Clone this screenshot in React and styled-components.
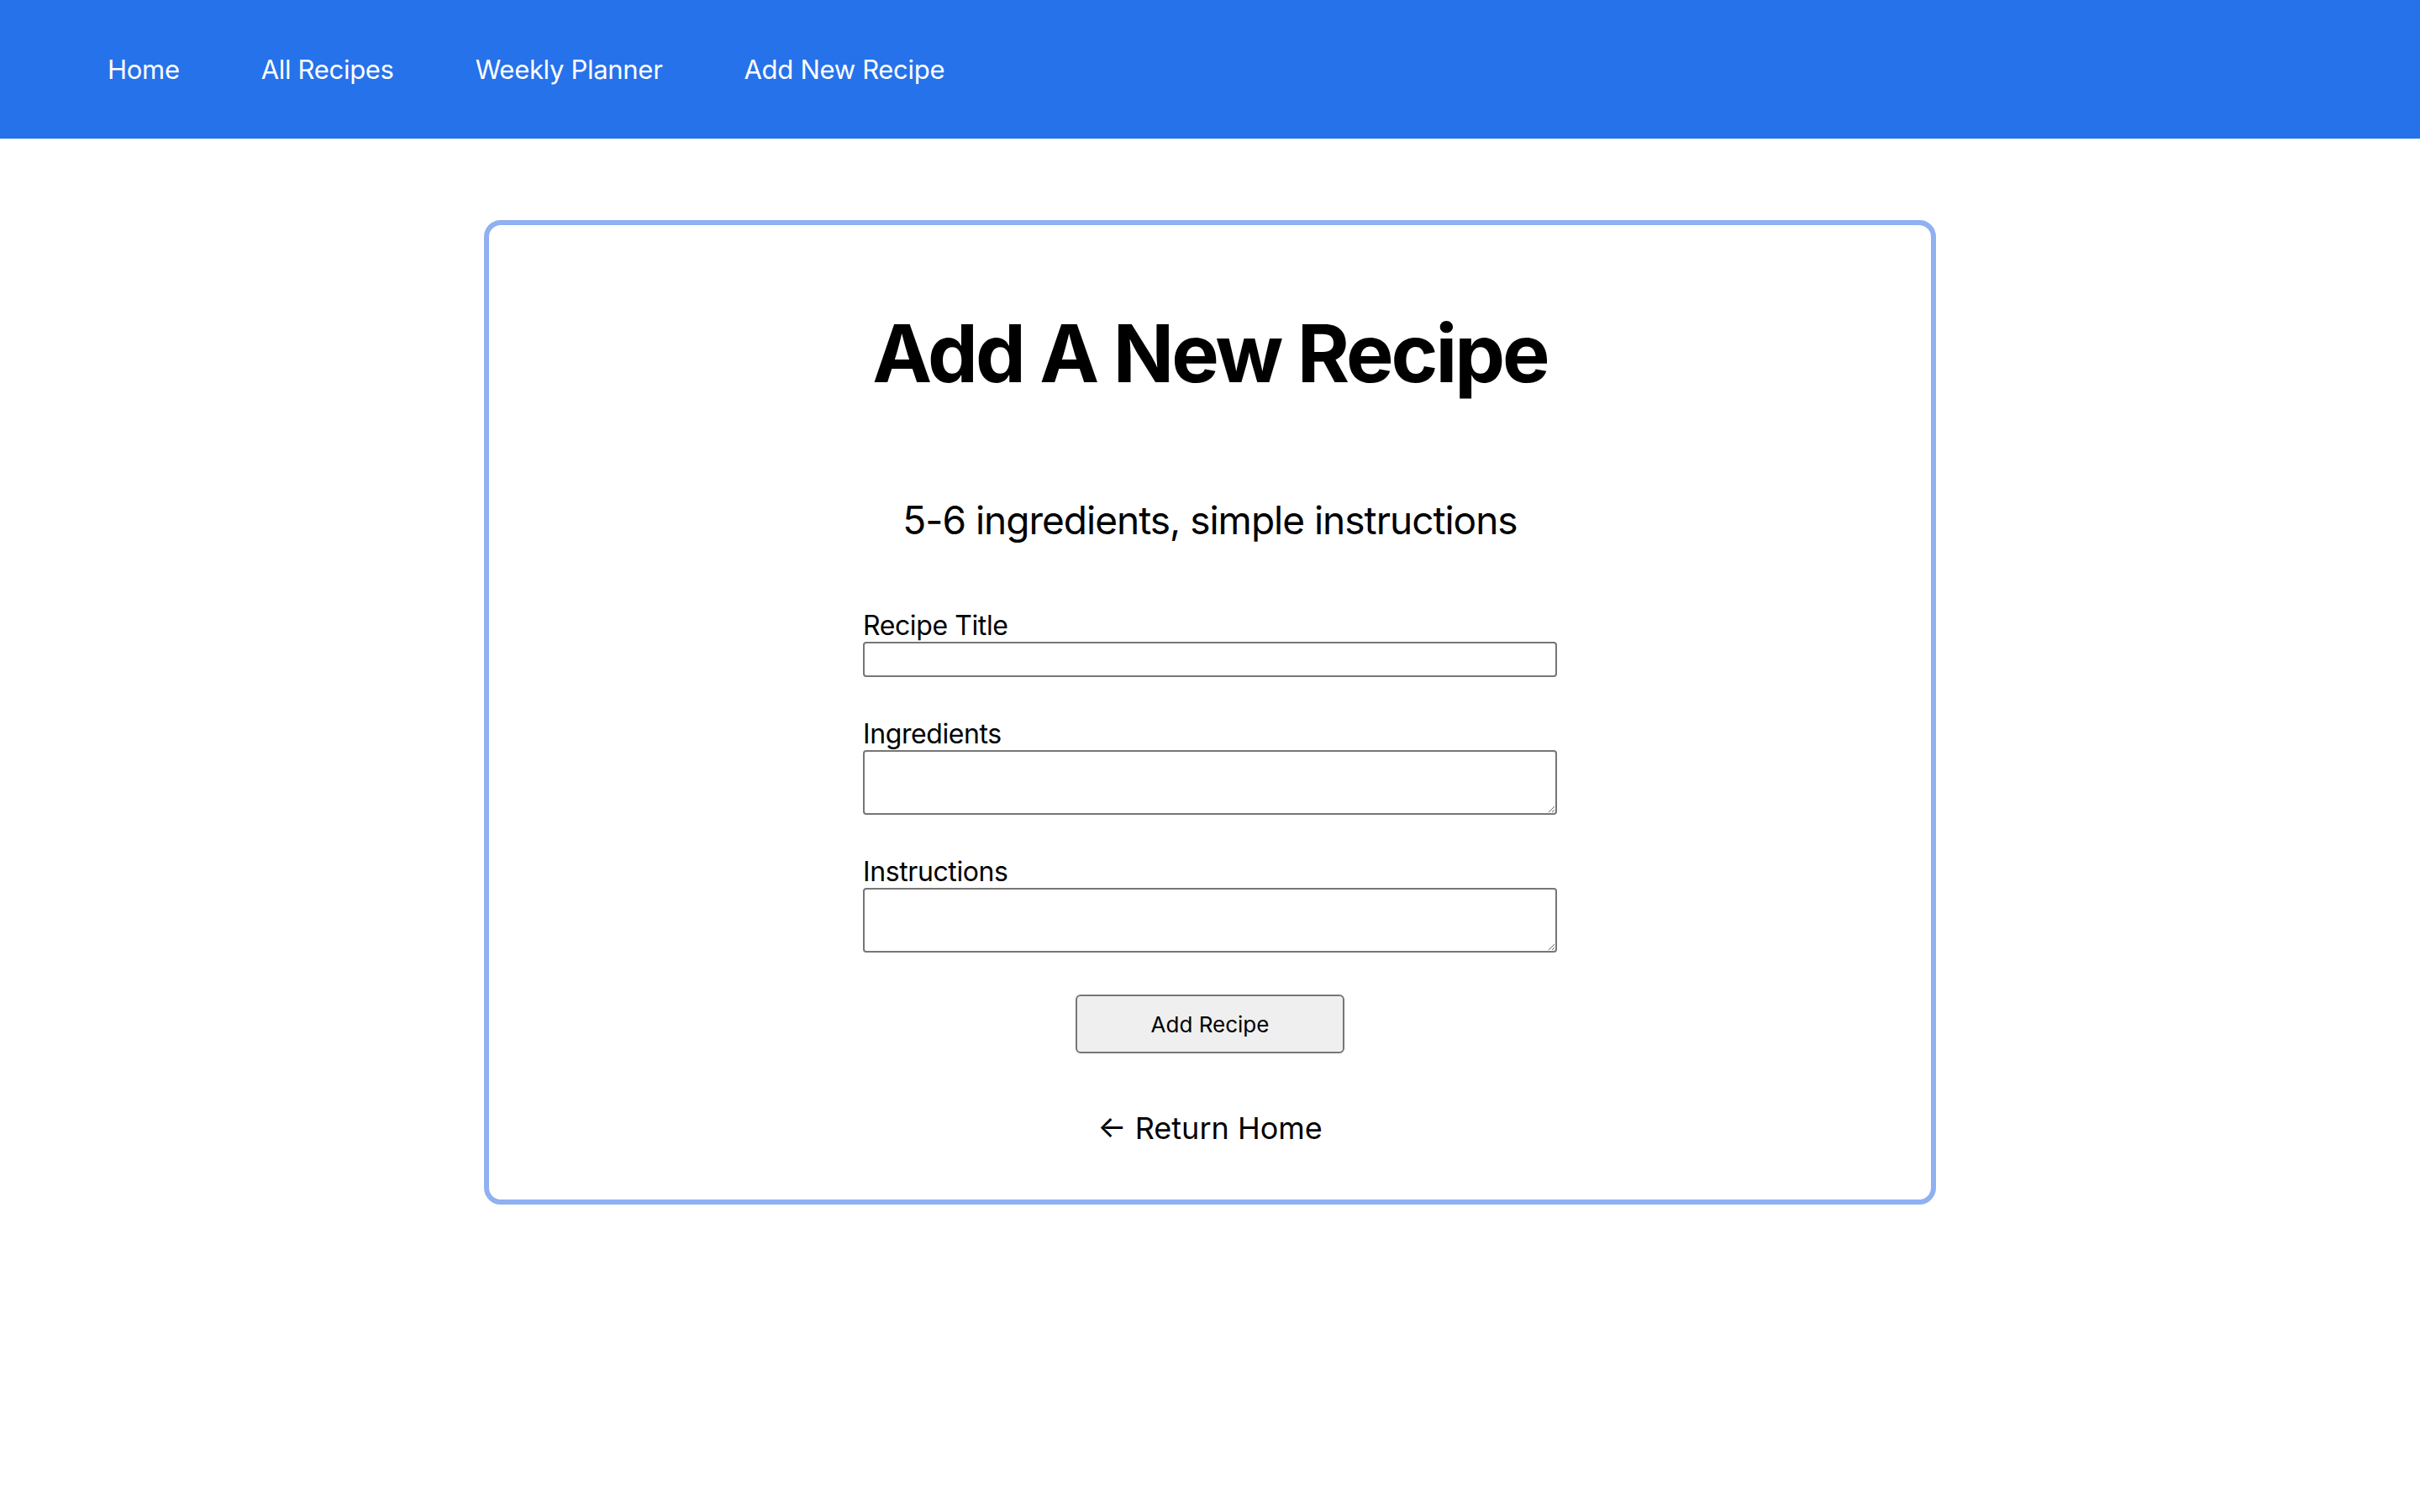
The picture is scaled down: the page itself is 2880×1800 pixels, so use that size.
import React, { useState } from "react";
import styled, { createGlobalStyle } from "styled-components";

const GlobalStyle = createGlobalStyle`
    body {
        margin: 0;
        background: #ffffff;
        font-family: Inter, "Liberation Sans", sans-serif;
        color: #000000;
    }
`;

export default function App() {
    const [titulo, setTitulo] = useState("");
    const [ingredientes, setIngredientes] = useState("");
    const [instrucciones, setInstrucciones] = useState("");

    const links = ["Home", "All Recipes", "Weekly Planner", "Add New Recipe"];

    const handleSubmit = (e) => {
        e.preventDefault();
    };

    return (
        <>
            <GlobalStyle />
            <NavBar>
                {links.map((link) => (
                    <NavLink key={link} href="#">{link}</NavLink>
                ))}
            </NavBar>
            <Card>
                <Title>Add A New Recipe</Title>
                <Subtitle>5-6 ingredients, simple instructions</Subtitle>
                <Form onSubmit={handleSubmit}>
                    <Field>
                        <Label htmlFor="title">Recipe Title</Label>
                        <TextInput id="title" value={titulo} onChange={(e) => setTitulo(e.target.value)} />
                    </Field>
                    <Field>
                        <Label htmlFor="ingredients">Ingredients</Label>
                        <TextArea id="ingredients" value={ingredientes} onChange={(e) => setIngredientes(e.target.value)} />
                    </Field>
                    <Field>
                        <Label htmlFor="instructions">Instructions</Label>
                        <TextArea id="instructions" value={instrucciones} onChange={(e) => setInstrucciones(e.target.value)} />
                    </Field>
                    <SubmitButton type="submit">Add Recipe</SubmitButton>
                </Form>
                <ReturnLink href="#">← Return Home</ReturnLink>
            </Card>
        </>
    );
}

const NavBar = styled.nav`
    display: flex;
    align-items: center;
    gap: 97px;
    height: 165px;
    padding: 0 128px;
    background-color: #2672ea;
`;

const NavLink = styled.a`
    color: #ffffff;
    font-size: 31px;
    letter-spacing: -0.3px;
    text-decoration: none;
`;

const Card = styled.div`
    box-sizing: border-box;
    width: 60%;
    margin: 97px auto 0;
    border: 6px solid #8fb0f1;
    border-radius: 20px;
    display: flex;
    flex-direction: column;
    align-items: center;
`;

const Title = styled.h1`
    margin: 95px 0 0;
    font-size: 95px;
    font-weight: 700;
    line-height: 116px;
    letter-spacing: -3px;
`;

const Subtitle = styled.p`
    margin: 111px 0 0;
    font-size: 46px;
    line-height: 58px;
    letter-spacing: -1px;
`;

const Form = styled.form`
    width: 826px;
    margin-top: 77px;
    display: flex;
    flex-direction: column;
    gap: 48px;
`;

const Field = styled.div`
    display: flex;
    flex-direction: column;
`;

const Label = styled.label`
    font-size: 32px;
    line-height: 39px;
    letter-spacing: -0.4px;
`;

const TextInput = styled.input`
    box-sizing: border-box;
    height: 42px;
    border: 2px solid #767676;
    border-radius: 4px;
    font-size: 26px;
    padding: 2px 4px;
`;

const TextArea = styled.textarea`
    box-sizing: border-box;
    height: 77px;
    border: 2px solid #767676;
    border-radius: 4px;
    font-size: 26px;
    padding: 4px;
`;

const SubmitButton = styled.button`
    align-self: center;
    width: 320px;
    height: 70px;
    margin-top: 2px;
    background: #efefef;
    border: 2px solid #767676;
    border-radius: 6px;
    font-family: Inter, "Liberation Sans", sans-serif;
    font-size: 26px;
    color: #000000;
`;

const ReturnLink = styled.a`
    margin: 67px 0 63px;
    font-size: 36px;
    line-height: 44px;
    color: #000000;
    text-decoration: none;
`;
